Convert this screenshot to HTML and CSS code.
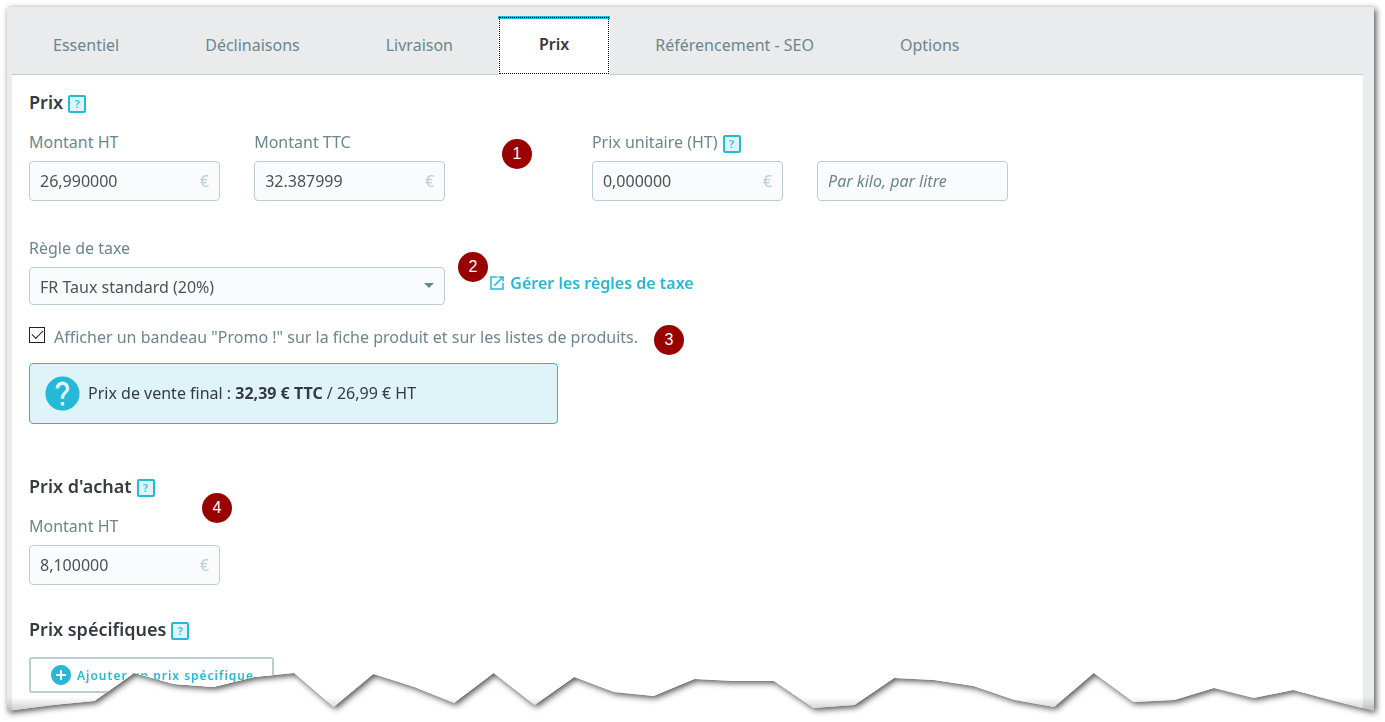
FILE: index.html
```
<!DOCTYPE html>
<html lang="fr">
<head>
    <meta charset="UTF-8">
    <meta name="viewport" content="width=device-width, initial-scale=1.0">
    <title>Produit - Prix</title>
    <link rel="stylesheet" href="styles.css">
</head>
<body>
    <div class="shadow">
        <div class="panel">
            <nav class="tabs">
                <a href="#essentiel">Essentiel</a>
                <a href="#declinaisons">Déclinaisons</a>
                <a href="#livraison">Livraison</a>
                <a href="#prix" class="active">Prix</a>
                <a href="#seo">Référencement - SEO</a>
                <a href="#options">Options</a>
            </nav>

            <form class="content">
                <h2>Prix <button type="button" class="help">?</button></h2>
                <div class="row">
                    <div class="col-2">
                        <label for="price-ht">Montant HT</label>
                        <div class="money"><input type="text" id="price-ht" value="26,990000"><span>€</span></div>
                    </div>
                    <div class="col-2">
                        <label for="price-ttc">Montant TTC</label>
                        <div class="money"><input type="text" id="price-ttc" value="32.387999"><span>€</span></div>
                    </div>
                    <div class="col-2 start-6">
                        <div class="label-line">
                            <label for="unit-price">Prix unitaire (HT)</label>
                            <button type="button" class="help">?</button>
                        </div>
                        <div class="money"><input type="text" id="unit-price" value="0,000000"><span>€</span></div>
                    </div>
                    <div class="col-2 bottom">
                        <div class="money"><input type="text" id="unity" placeholder="Par kilo, par litre" aria-label="Unité"></div>
                    </div>
                </div>

                <div class="row tax">
                    <div class="col-4">
                        <label for="tax-rule">Règle de taxe</label>
                        <div class="select">
                            <select id="tax-rule">
                                <option>FR Taux standard (20%)</option>
                            </select>
                        </div>
                    </div>
                    <a href="#taxes" class="tax-link">
                        <svg width="18" height="18" viewBox="0 0 24 24"><path fill="currentColor" d="M19 19H5V5h7V3H3v18h18v-9h-2v7zM14 3v2h3.590l-9.830 9.830 1.410 1.410L19 6.410V10h2V3h-7z"/></svg>
                        Gérer les règles de taxe
                    </a>
                </div>

                <div class="check">
                    <input type="checkbox" id="on-sale" checked>
                    <label for="on-sale">Afficher un bandeau "Promo !" sur la fiche produit et sur les listes de produits.</label>
                </div>

                <div class="row">
                    <div class="col-5 alert">
                        <svg width="41" height="41" viewBox="0 0 24 24"><path fill="currentColor" d="M12 2C6.480 2 2 6.480 2 12s4.480 10 10 10 10-4.480 10-10S17.520 2 12 2zm1 17h-2v-2h2v2zm2.070-7.750l-.9.920C13.450 12.900 13 13.500 13 15h-2v-.5c0-1.100.45-2.100 1.170-2.830l1.240-1.260c.37-.36.59-.86.59-1.410 0-1.100-.9-2-2-2s-2 .9-2 2H8c0-2.210 1.790-4 4-4s4 1.790 4 4c0 .88-.36 1.680-.93 2.250z"/></svg>
                        <p>Prix de vente final : <strong>32,39 € TTC</strong> / 26,99 € HT</p>
                    </div>
                </div>

                <h2 class="purchase">Prix d'achat <button type="button" class="help">?</button></h2>
                <div class="row">
                    <div class="col-2">
                        <label for="wholesale">Montant HT</label>
                        <div class="money"><input type="text" id="wholesale" value="8,100000"><span>€</span></div>
                    </div>
                </div>

                <h2 class="specific">Prix spécifiques <button type="button" class="help">?</button></h2>
                <button type="button" class="add">
                    <svg width="24" height="24" viewBox="0 0 24 24"><path fill="currentColor" d="M12 2C6.480 2 2 6.480 2 12s4.480 10 10 10 10-4.480 10-10S17.520 2 12 2zm5 11h-4v4h-2v-4H7v-2h4V7h2v4h4v2z"/></svg>
                    Ajouter un prix spécifique
                </button>

                <!-- numbered marks laid over the form -->
                <span class="pin pin-1">1</span>
                <span class="pin pin-2">2</span>
                <span class="pin pin-3">3</span>
                <span class="pin pin-4">4</span>
            </form>
        </div>
    </div>
</body>
</html>
```
FILE: styles.css
```
* {
    box-sizing: border-box;
}
body {
    margin: 0;
    background: #fff;
    color: #363a41;
    font-family: "Noto Sans", "Open Sans", sans-serif;
    font-size: 16px;
    line-height: 22px;
}
.shadow {
    padding: 7px 11px 11px 7px;
    filter: drop-shadow(2px 2px 3px rgba(0, 0, 0, 0.7));
}
/* torn bottom edge */
.panel {
    position: relative;
    padding: 9px 11px 0 5px;
    background: #e9ebec;
    clip-path: polygon(0 0, 100% 0, 100% 100%,
        97.1% calc(100% - 10px), 94.1% calc(100% - 21px), 91.2% calc(100% - 13px),
        88.3% calc(100% - 23px), 85.4% calc(100% - 11px), 82.4% calc(100% - 9px),
        79.5% calc(100% - 38px), 76.6% calc(100% - 4px), 73.7% calc(100% - 11px),
        70.7% calc(100% - 25px), 67.8% calc(100% - 31px), 64.9% calc(100% - 33px),
        62% calc(100% - 6px), 59% calc(100% - 3px), 56.1% calc(100% - 30px),
        53.2% calc(100% - 30px), 50.3% calc(100% - 32px), 47.3% calc(100% - 15px),
        44.4% calc(100% - 19px), 41.5% calc(100% - 34px), 38.6% calc(100% - 6px),
        35.6% calc(100% - 38px), 32.7% calc(100% - 8px), 29.8% calc(100% - 24px),
        26.8% calc(100% - 37px), 23.9% calc(100% - 4px), 21% calc(100% - 38px),
        18.1% calc(100% - 34px), 15.1% calc(100% - 24px), 12.2% calc(100% - 27px),
        9.3% calc(100% - 38px), 6.4% calc(100% - 10px), 3.4% calc(100% - 6px),
        0 100%);
}
.panel::after {
    content: "";
    position: absolute;
    right: 0;
    bottom: 0;
    left: 0;
    height: 14px;
    background: linear-gradient(rgba(0, 0, 0, 0), rgba(0, 0, 0, 0.2));
}
.tabs {
    display: flex;
    gap: 4px;
    border-bottom: 1px solid #bbcdd2;
}
.tabs a {
    height: 59px;
    margin-bottom: -1px;
    padding: 15px 41px 0;
    border-top: 3px solid transparent;
    color: #6c868e;
    text-decoration: none;
    white-space: nowrap;
}
.tabs .active {
    border-top-color: #25b9d7;
    background: #fff;
    color: #363a41;
    font-weight: 600;
    line-height: 20px;
    outline: 1px dotted #000;
    outline-offset: -2px;
}
.content {
    position: relative;
    padding: 14px 17px 18px;
    background: #fff;
}
h2 {
    display: flex;
    align-items: center;
    gap: 5px;
    margin: 0 0 16px;
    font-size: 18px;
    font-weight: 600;
    line-height: 26px;
}
.help {
    width: 18px;
    height: 18px;
    margin-top: 4px;
    padding: 0;
    border: 2px solid #25b9d7;
    border-radius: 2px;
    background: #dff4f9;
    color: #4ac7e0;
    font-family: inherit;
    font-size: 11px;
    font-weight: 700;
    line-height: 14px;
}
.row {
    display: grid;
    grid-template-columns: repeat(12, 1fr);
    column-gap: 34px;
}
.col-2 {
    grid-column-end: span 2;
}
.col-4 {
    grid-column-end: span 4;
}
.col-5 {
    grid-column-end: span 5;
}
.start-6 {
    grid-column-start: 6;
}
.bottom {
    align-self: end;
}
label {
    display: block;
    color: #6c868e;
    white-space: nowrap;
}
.label-line {
    display: flex;
    align-items: center;
    gap: 5px;
    height: 22px;
}
.money, .select {
    display: flex;
    align-items: center;
    height: 40px;
    margin-top: 8px;
    border: 1px solid #bbcdd2;
    border-radius: 4px;
    background: #fafbfc;
}
.money {
    padding: 0 10px;
}
.money input {
    flex: 1;
    min-width: 0;
    padding: 0;
    border: 0;
    outline: 0;
    background: none;
    color: #4e5257;
    font: inherit;
}
.money input::placeholder {
    color: #6c868e;
    font-style: italic;
    opacity: 1;
}
.money span {
    color: #bbcdd2;
}
.tax {
    margin-top: 36px;
}
.select {
    position: relative;
    height: 38px;
}
.select select {
    width: 100%;
    height: 100%;
    padding: 2px 30px 0 10px;
    border: 0;
    appearance: none;
    background: none;
    color: #4e5257;
    font: inherit;
}
.select::after {
    content: "";
    position: absolute;
    top: 15px;
    right: 10px;
    border: 5px solid transparent;
    border-top-color: #6c868e;
    border-bottom: 0;
    pointer-events: none;
}
.tax-link {
    display: flex;
    grid-column-end: span 4;
    align-items: center;
    align-self: end;
    gap: 4px;
    margin: 0 0 11px 9px;
    color: #25b9d7;
    font-weight: 600;
    text-decoration: none;
}
.check {
    display: flex;
    align-items: flex-start;
    gap: 9px;
    margin: 21px 0 15px;
}
.check input {
    display: grid;
    place-items: center;
    width: 16px;
    height: 16px;
    margin: 1px 0 0;
    border: 1px solid #222;
    appearance: none;
    background: #fff;
}
.check input:checked::before {
    content: "";
    width: 10px;
    height: 5px;
    margin-bottom: 4px;
    border: solid #222;
    border-width: 0 0 1px 1px;
    transform: rotate(-45deg);
}
.alert {
    display: flex;
    align-items: center;
    gap: 5px;
    height: 61px;
    padding: 0 12px;
    border: 1px solid #25b9d7;
    border-radius: 4px;
    background: #dff4f9;
}
.alert svg {
    color: #25b9d7;
}
.alert p {
    margin: 0 0 2px;
}
.purchase {
    margin-top: 49px;
}
.specific {
    margin: 31px 0 15px;
}
.add {
    display: flex;
    align-items: center;
    gap: 4px;
    height: 36px;
    padding: 0 18px;
    border: 2px solid #bbcdd2;
    border-radius: 3px;
    background: #fff;
    color: #25b9d7;
    font-family: inherit;
    font-size: 12px;
    font-weight: 600;
    letter-spacing: 1px;
}
.pin {
    position: absolute;
    width: 30px;
    height: 30px;
    border-radius: 50%;
    background: #900;
    color: #fff;
    font-family: "Liberation Sans", Arial, sans-serif;
    line-height: 30px;
    text-align: center;
}
.pin-1 {
    top: 64px;
    left: 490px;
}
.pin-2 {
    top: 177px;
    left: 446px;
}
.pin-3 {
    top: 250px;
    left: 642px;
}
.pin-4 {
    top: 418px;
    left: 190px;
}
```
